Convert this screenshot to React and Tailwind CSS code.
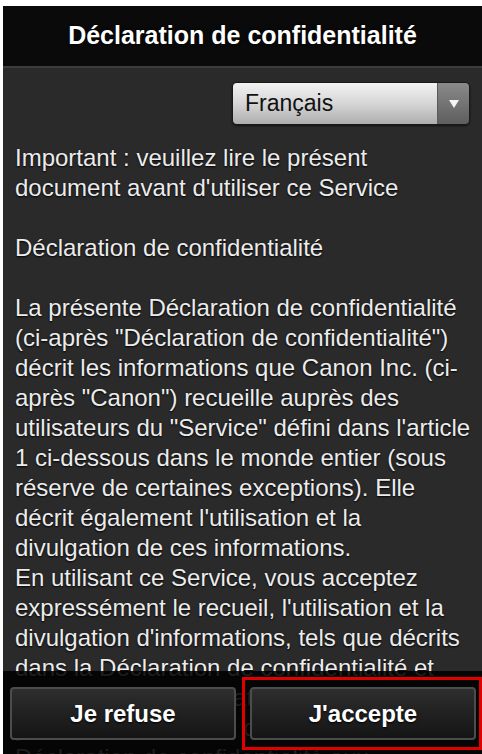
import React from 'react';

const lines = [
  'Important : veuillez lire le présent',
  "document avant d'utiliser ce Service",
  '',
  'Déclaration de confidentialité',
  '',
  'La présente Déclaration de confidentialité',
  '(ci-après "Déclaration de confidentialité")',
  'décrit les informations que Canon Inc. (ci-',
  'après "Canon") recueille auprès des',
  'utilisateurs du "Service" défini dans l\'article',
  '1 ci-dessous dans le monde entier (sous',
  'réserve de certaines exceptions). Elle',
  "décrit également l'utilisation et la",
  'divulgation de ces informations.',
  'En utilisant ce Service, vous acceptez',
  "expressément le recueil, l'utilisation et la",
  "divulgation d'informations, tels que décrits",
  'dans la Déclaration de confidentialité et',
  "les conditions d'utilisation du Service. La",
  'présente Déclaration de confidentialité est',
  'Déclaration de confidentialité aux',
];

function Button({ children }) {
  return (
    <button className="w-[226px] h-[53px] rounded-[4px] border-2 border-[#4c4c4c] bg-gradient-to-b from-[#2e2e2e] to-[#151515] text-white font-bold text-[24px] [text-shadow:0_1px_2px_#000]">
      {children}
    </button>
  );
}

export default function App() {
  return (
    <div
      className="w-[482px] h-[754px] bg-white pl-[3px] pt-[6px] overflow-hidden"
      style={{ fontFamily: '"Liberation Sans", Arial, sans-serif' }}
    >
      <div className="relative h-full bg-[#2a2a2a] flex flex-col overflow-hidden">
        {/* header */}
        <div className="h-[60px] shrink-0 bg-[#0a0a0a] flex items-center justify-center">
          <h1 className="text-white font-bold text-[25px] [text-shadow:0_0_3px_#000]">
            Déclaration de confidentialité
          </h1>
        </div>
        <div className="h-[2px] shrink-0 bg-[#3c3c3c]" />

        {/* language select */}
        <div className="flex justify-end pr-[12px] pt-[14px] shrink-0">
          <div className="w-[238px] h-[43px] rounded-[5px] flex overflow-hidden border border-[#1a1a1a] shadow-[0_1px_2px_rgba(0,0,0,0.6)]">
            <div className="flex-1 flex items-center pl-[12px] bg-gradient-to-b from-[#f2f2f2] via-[#d6d6d6] to-[#aeaeae] text-[#111] text-[23px]">
              Français
            </div>
            <div className="w-[32px] flex items-center justify-center border-l border-[#5a5a5a] bg-gradient-to-b from-[#8a8a8a] to-[#5e5e5e]">
              <svg width="12" height="10" viewBox="0 0 12 10">
                <path d="M1 1 L11 1 L6 9 Z" fill="#f4f4f4" />
              </svg>
            </div>
          </div>
        </div>

        {/* body text */}
        <div className="pl-[12px] pt-[18px] text-[24px] leading-[30px] text-[#ececec] [text-shadow:0_1px_2px_#000]">
          {lines.map((l, i) => (
            <div key={i} className="whitespace-nowrap h-[30px]">
              {l}
            </div>
          ))}
        </div>

        {/* bottom bar */}
        <div className="absolute left-0 right-0 bottom-0 h-[83px] bg-black/[0.88] flex items-start gap-[14px] pl-[7px] pt-[16px]">
          <Button>Je refuse</Button>
          <Button>J'accepte</Button>
          <div className="absolute left-[239px] top-[6px] right-0 h-[73px] border-[3px] border-[#e00000]" />
        </div>
      </div>
    </div>
  );
}
